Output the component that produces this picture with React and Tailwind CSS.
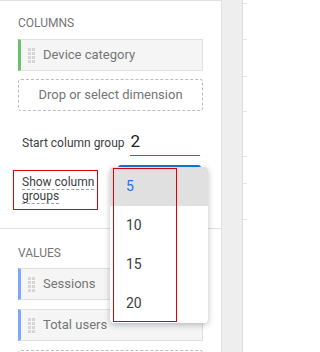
import React from 'react'

const Handle = () => (
    <div className="grid grid-cols-2 gap-[1px] w-[7px]">
        {Array.from({ length: 8 }).map((_, i) => (
            <span key={i} className="block w-[3px] h-[3px] bg-[#d6d6d6]" />
        ))}
    </div>
)

const Chip = ({ label, color }) => (
    <div className={`flex items-center h-[32px] bg-[#f5f5f5] border border-[#e0e0e0] border-l-[3px] ${color}`}>
        <div className="ml-[7px] mr-[8px]">
            <Handle />
        </div>
        <span className="text-[13px] text-[#757575] whitespace-nowrap">{label}</span>
    </div>
)

const DropZone = () => (
    <div className="flex items-center justify-center h-[32px] border border-dashed border-[#bdbdbd] rounded-[3px] text-[13px] text-[#757575] whitespace-nowrap">
        Drop or select dimension
    </div>
)

const App = () => {
    return (
        <div className="relative flex w-[247px] h-[352px] overflow-hidden bg-white font-['Roboto',sans-serif]">

            {/* Left panel */}
            <div className="w-[222px] shrink-0 border-t border-r border-[#e0e0e0] bg-white">
                <div className="px-[18px] pt-[15px] pb-[18px] border-b border-[#e0e0e0]">
                    <div className="text-[12px] leading-[14px] text-[#757575] mb-[9px]">COLUMNS</div>
                    <Chip label="Device category" color="border-l-[#6cc06c]" />
                    <div className="mt-[8px]">
                        <DropZone />
                    </div>

                    <div className="flex items-end mt-[19px] pl-[4px]">
                        <span className="shrink-0 whitespace-nowrap text-[12px] leading-[16px] text-[#3c4043] mb-[5px]">Start column group</span>
                        <div className="shrink-0 ml-[5px] w-[70px] h-[26px] border-b border-[#1a73e8] text-[17px] leading-[22px] text-[#202124] pl-[1px]">2</div>
                    </div>

                    <div className="mt-[14px] -ml-[5px] w-[85px] h-[40px] border border-[#e00000] pl-[8px] pt-[4px]">
                        <div className="text-[12px] leading-[14px] text-[#3c4043] whitespace-nowrap">
                            <span className="border-b border-dashed border-[#9e9e9e]">Show column</span>
                            <br />
                            <span className="border-b border-dashed border-[#9e9e9e]">groups</span>
                        </div>
                    </div>
                </div>

                <div className="px-[18px] pt-[17px]">
                    <div className="text-[12px] leading-[14px] text-[#757575] mb-[8px]">VALUES</div>
                    <Chip label="Sessions" color="border-l-[#7baaf7]" />
                    <div className="mt-[9px]">
                        <Chip label="Total users" color="border-l-[#7baaf7]" />
                    </div>
                    <div className="mt-[9px]">
                        <DropZone />
                    </div>
                </div>
            </div>

            {/* Gutter */}
            <div className="w-[20px] shrink-0 bg-[#eeeeee]" />

            {/* Table edge */}
            <div className="flex-1 flex flex-col border-l border-[#dddddd] bg-white">
                <div className="h-[4px] border-b border-[#e6e6e6]" />
                <div className="h-[36px] border-b border-[#e6e6e6]" />
                <div className="h-[37px] border-b border-[#e6e6e6]" />
                <div className="h-[35px] border-b border-[#e6e6e6]" />
                <div className="h-[45px] border-b border-[#e6e6e6]" />
                <div className="h-[27px] border-b border-[#e6e6e6]" />
                <div className="h-[36px] border-b border-[#e6e6e6]" />
            </div>

            {/* Select underline peeking behind the menu */}
            <div className="absolute left-[118px] top-[165px] w-[83px] h-[4px] rounded-t-[3px] bg-[#1a73e8]" />

            {/* Dropdown menu */}
            <div className="absolute left-[110px] top-[167px] w-[98px] h-[156px] bg-white rounded-[4px] overflow-hidden shadow-[0_2px_6px_rgba(0,0,0,0.25)]">
                {["5", "10", "15", "20"].map((v, i) => (
                    <div
                        key={v}
                        className={`flex items-center h-[39px] pl-[16px] text-[14px] ${i === 0 ? 'bg-[#e0e0e0] text-[#1a73e8]' : 'text-[#3c4043]'}`}
                    >
                        {v}
                    </div>
                ))}
            </div>

            {/* Red highlight box */}
            <div className="absolute left-[113px] top-[168px] w-[64px] h-[154px] border border-[#e00000] pointer-events-none" />
        </div>
    )
}

export default App
